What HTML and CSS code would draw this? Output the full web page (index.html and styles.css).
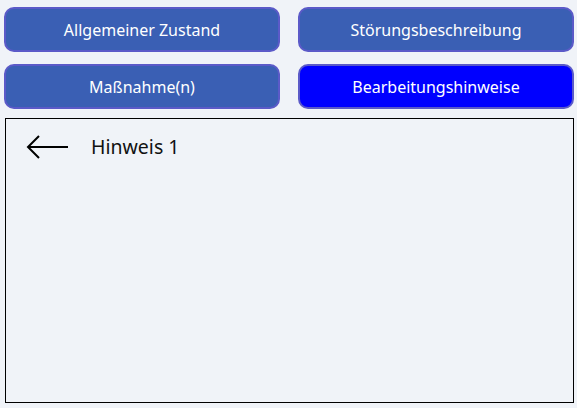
FILE: index.html
```html
<!DOCTYPE html>
<html lang="de">
<head>
<meta charset="utf-8">
<link rel="stylesheet" href="styles.css">
</head>
<body>
<div class="page">
  <div class="tabs">
    <button class="tab">Allgemeiner Zustand</button>
    <button class="tab">Störungsbeschreibung</button>
    <button class="tab">Maßnahme(n)</button>
    <button class="tab active">Bearbeitungshinweise</button>
  </div>
  <div class="panel">
    <div class="head">
      <svg class="back" width="44" height="26" viewBox="0 0 44 26">
        <path d="M2 13 H42 M13 2 L2 13 L13 24" fill="none" stroke="#000" stroke-width="2"/>
      </svg>
      <span class="title">Hinweis 1</span>
    </div>
  </div>
</div>
</body>
</html>
```
FILE: styles.css
```css
html, body {
  margin: 0;
  padding: 0;
  background: #f0f3f8;
  font-family: "Noto Sans", "Open Sans", sans-serif;
}
.page {
  width: 577px;
  height: 408px;
  box-sizing: border-box;
  padding: 7px 3px 5px 4px;
  display: flex;
  flex-direction: column;
}
.tabs {
  display: grid;
  grid-template-columns: 276px 276px;
  grid-auto-rows: 45px;
  column-gap: 18px;
  row-gap: 12px;
}
.tab {
  box-sizing: border-box;
  border: 2px solid #5b5ac8;
  border-radius: 10px;
  background: #3a5fb4;
  color: #fff;
  font-family: inherit;
  font-size: 16px;
  padding: 0;
  margin: 0;
}
.tab.active {
  background: #0000ff;
}
.panel {
  margin: 9px 0 0 1px;
  width: 569px;
  box-sizing: border-box;
  flex: 1;
  border: 1px solid #000;
}
.head {
  display: flex;
  align-items: center;
  padding: 14px 0 0 20px;
  gap: 21px;
}
.back {
  display: block;
}
.title {
  font-size: 19.5px;
  color: #111;
}
```
